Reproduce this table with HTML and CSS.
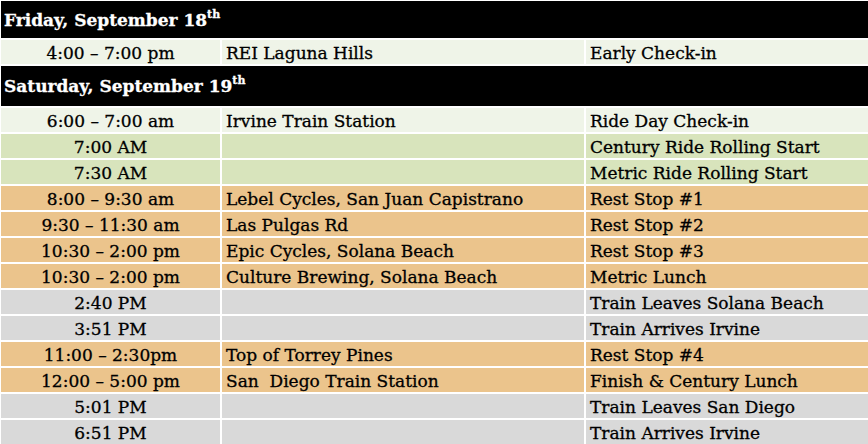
FILE: index.html
```html
<!DOCTYPE html>
<html>
<head>
<meta charset="utf-8">
<link rel="stylesheet" href="styles.css">
</head>
<body>
<table class="schedule">
  <colgroup>
    <col class="c-time">
    <col class="c-place">
    <col class="c-what">
  </colgroup>
  <tbody>
    <tr class="day day-first"><td colspan="3">Friday, September 18<sup>th</sup></td></tr>
    <tr class="light"><td class="time">4:00 – 7:00 pm</td><td>REI Laguna Hills</td><td>Early Check-in</td></tr>
    <tr class="day"><td colspan="3">Saturday, September 19<sup>th</sup></td></tr>
    <tr class="light"><td class="time">6:00 – 7:00 am</td><td>Irvine Train Station</td><td>Ride Day Check-in</td></tr>
    <tr class="green"><td class="time">7:00 AM</td><td></td><td>Century Ride Rolling Start</td></tr>
    <tr class="green"><td class="time">7:30 AM</td><td></td><td>Metric Ride Rolling Start</td></tr>
    <tr class="tan"><td class="time">8:00 – 9:30 am</td><td>Lebel Cycles, San Juan Capistrano</td><td>Rest Stop #1</td></tr>
    <tr class="tan"><td class="time">9:30 – 11:30 am</td><td>Las Pulgas Rd</td><td>Rest Stop #2</td></tr>
    <tr class="tan"><td class="time">10:30 – 2:00 pm</td><td>Epic Cycles, Solana Beach</td><td>Rest Stop #3</td></tr>
    <tr class="tan"><td class="time">10:30 – 2:00 pm</td><td>Culture Brewing, Solana Beach</td><td>Metric Lunch</td></tr>
    <tr class="gray"><td class="time">2:40 PM</td><td></td><td>Train Leaves Solana Beach</td></tr>
    <tr class="gray"><td class="time">3:51 PM</td><td></td><td>Train Arrives Irvine</td></tr>
    <tr class="tan"><td class="time">11:00 – 2:30pm</td><td>Top of Torrey Pines</td><td>Rest Stop #4</td></tr>
    <tr class="tan"><td class="time">12:00 – 5:00 pm</td><td>San&nbsp; Diego Train Station</td><td>Finish &amp; Century Lunch</td></tr>
    <tr class="gray"><td class="time">5:01 PM</td><td></td><td>Train Leaves San Diego</td></tr>
    <tr class="gray"><td class="time">6:51 PM</td><td></td><td>Train Arrives Irvine</td></tr>
  </tbody>
</table>
</body>
</html>
```

FILE: styles.css
```css
html, body {
  margin: 0;
  padding: 0;
  background: #ffffff;
  overflow: hidden;
}

.schedule {
  border-collapse: separate;
  border-spacing: 2px;
  table-layout: fixed;
  width: 871px;
  margin: -1px 0 0 -1px;
  font-family: "DejaVu Serif", serif;
  font-size: 17px;
  color: #000;
  -webkit-text-stroke: 0.3px #000;
}

.c-time { width: 219px; }
.c-place { width: 362px; }
.c-what { width: 282px; }

.schedule tr {
  height: 24px;
}

.schedule td {
  height: 24px;
  box-sizing: border-box;
  padding: 3px 0 0 4px;
  white-space: nowrap;
  overflow: hidden;
  line-height: 21px;
  vertical-align: middle;
}

.schedule td.time {
  text-align: center;
  padding-left: 0;
}

.day td {
  background: #000;
  color: #fff;
  -webkit-text-stroke: 0.3px #fff;
  font-weight: bold;
  font-size: 17px;
  height: 40px;
  padding: 1px 0 0 3px;
  line-height: 39px;
}

.day-first td {
  height: 37px;
  line-height: 36px;
}

.day sup {
  font-size: 11px;
  line-height: 0;
  vertical-align: 8px;
}

.light td { background: #eff4e8; }
.green td { background: #d8e4bc; }
.tan td { background: #ebc48c; }
.gray td { background: #d9d9d9; }
```
